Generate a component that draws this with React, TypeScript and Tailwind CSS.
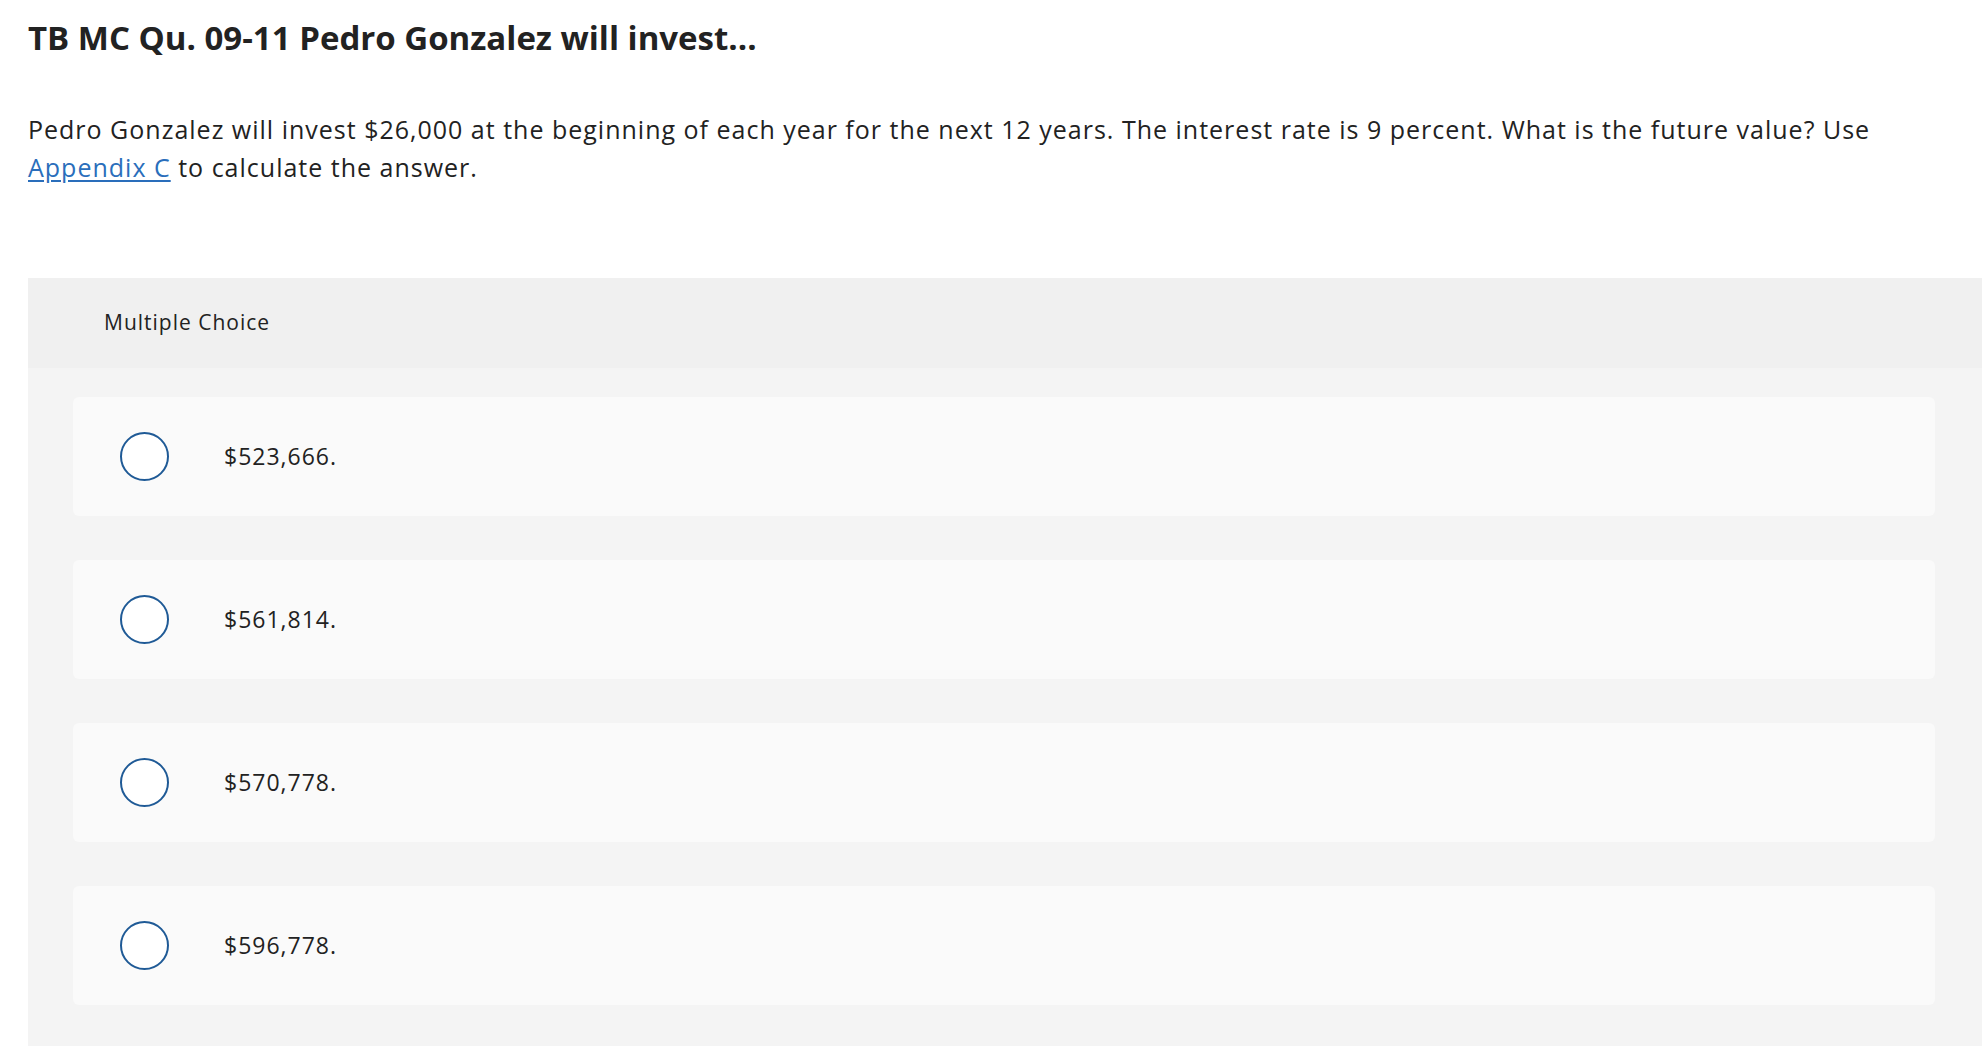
import React from "react";

const options = ["$523,666.", "$561,814.", "$570,778.", "$596,778."];

export default function App() {
  return (
    <div className="min-h-screen bg-white text-[#222222]" style={{ fontFamily: "'Open Sans', Lato, sans-serif" }}>
      <div className="pl-[28px]">
        <h1 className="pt-[18px] text-[33px] leading-[40px] font-bold text-[#222222]">
          TB MC Qu. 09-11 Pedro Gonzalez will invest...
        </h1>
        <p className="mt-[52px] pr-[60px] text-[25px] leading-[38px] tracking-[1px] text-[#222222]">
          Pedro Gonzalez will invest $26,000 at the beginning of each year for the next 12 years. The interest rate is 9 percent. What is the future value? Use
          <br />
          <a href="#" className="text-[#2a6ebb] underline underline-offset-[3px]">Appendix C</a> to calculate the answer.
        </p>
        <div className="mt-[92px]">
          <div className="flex h-[90px] items-center bg-[#f0f0f0] pl-[76px] text-[21px] tracking-[1px] text-[#222222]">
            Multiple Choice
          </div>
          <div className="flex flex-col gap-[44px] bg-[#f4f4f4] pb-[60px] pl-[45px] pr-[47px] pt-[29px]">
            {options.map((o) => (
              <div key={o} className="flex h-[119px] items-center rounded-[6px] bg-[#fafafa] pl-[47px]">
                <span className="block h-[49px] w-[49px] rounded-full border-2 border-[#1f5a96] bg-white" />
                <span className="ml-[55px] text-[23px] tracking-[1px] text-[#222222]">{o}</span>
              </div>
            ))}
          </div>
        </div>
      </div>
    </div>
  );
}
